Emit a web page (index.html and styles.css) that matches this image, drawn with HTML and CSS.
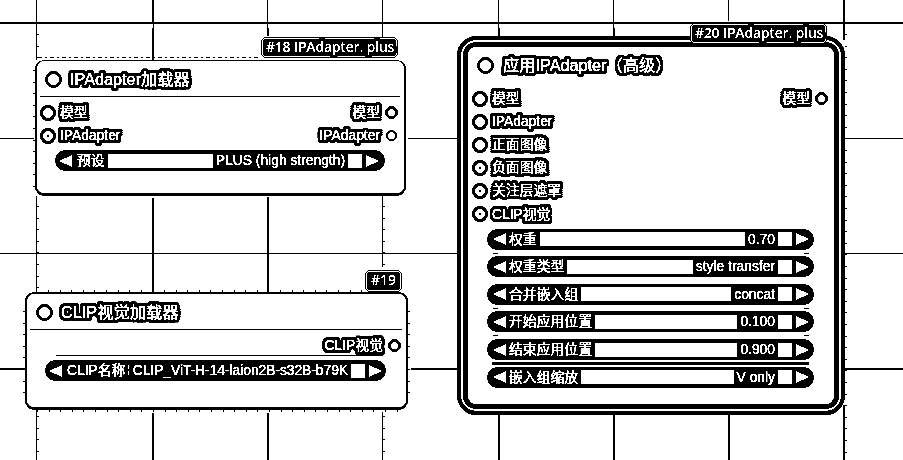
FILE: index.html
```html
<!DOCTYPE html>
<html lang="zh-CN">
<head>
<meta charset="utf-8">
<title>IPAdapter</title>
<link rel="stylesheet" href="styles.css">
</head>
<body>
<main class="canvas">
  <svg class="grid" width="903" height="460" viewBox="0 0 903 460" fill="none" stroke="#000" shape-rendering="crispEdges">
    <path stroke-width="2" d="M0 23H903M153 0V22M153 28V60M153 198V292M153 413V460M268 28V36M268 197V292M268 413V460M499 28V36M499 415V460M614 28V36M614 415V460M729 415V460M844 0V40M844 405V460M0 369H25M411 369H457M845 369H903"/>
    <path d="M36.5 0V60M36.5 196V292M36.5 410V460M153.5 0V28M267.5 0V28M382.5 0V37M382.5 196V267M382.5 412V460M498.5 0V36M613.5 0V36M728.5 0V21M0 138.5H34M408 138.5H457M845 138.5H903M0 253.5H457M845 253.5H903"/>
    <path stroke-width="2" stroke-dasharray="1 10.6" d="M38 34V60M38 206V292M38 416V460M384 206V267M384 416V460M845.500 34V460M34 70V190M24 311V400M409 311V400M468 83V400M48 291H362M37 410.500H400M300 61.500H392"/>
    <path stroke-dasharray="4 3 2 3" d="M38 57.500H258"/>
  </svg>

  <section class="node node-a">
    <span class="badge"><span class="halo">#18 IPAdapter. plus</span></span>
    <header class="title"><i class="ring big"></i><span class="halo">IPAdapter加载器</span></header>
    <div class="slots">
      <div class="slot"><i class="ring"></i><span class="halo">模型</span><span class="halo out">模型</span><i class="ring small"></i></div>
      <div class="slot"><i class="ring dot"></i><span class="halo">IPAdapter</span><span class="halo out">IPAdapter</span><i class="ring small thin"></i></div>
    </div>
    <div class="widget"><svg class="arrow" viewBox="0 0 13 12"><path d="M13 0V12L0 6z"/></svg><span class="label">预设</span><i class="fill"></i><span class="value">PLUS (high strength)</span><i class="cap"></i><svg class="arrow" viewBox="0 0 13 12"><path d="M0 0V12L13 6z"/></svg></div>
  </section>

  <section class="node node-b">
    <span class="badge"><span class="halo">#19</span></span>
    <header class="title"><i class="ring big"></i><span class="halo">CLIP视觉加载器</span></header>
    <div class="slots">
      <div class="slot"><span class="halo out">CLIP视觉</span><i class="ring small"></i></div>
    </div>
    <div class="widget"><svg class="arrow" viewBox="0 0 13 12"><path d="M13 0V12L0 6z"/></svg><span class="label">CLIP名称</span><i class="tick"></i><span class="value model">CLIP_ViT-H-14-laion2B-s32B-b79K</span><i class="cap"></i><svg class="arrow" viewBox="0 0 13 12"><path d="M0 0V12L13 6z"/></svg></div>
  </section>

  <section class="node node-c">
    <span class="badge"><span class="halo">#20 IPAdapter. plus</span></span>
    <header class="title"><i class="ring big"></i><span class="halo">应用IPAdapter（高级）</span></header>
    <div class="slots">
      <div class="slot"><i class="ring"></i><span class="halo">模型</span><span class="halo out">模型</span><i class="ring small"></i></div>
      <div class="slot"><i class="ring"></i><span class="halo">IPAdapter</span></div>
      <div class="slot"><i class="ring"></i><span class="halo">正面图像</span></div>
      <div class="slot"><i class="ring dot"></i><span class="halo">负面图像</span></div>
      <div class="slot"><i class="ring dot"></i><span class="halo">关注层遮罩</span></div>
      <div class="slot"><i class="ring dot"></i><span class="halo">CLIP视觉</span></div>
    </div>
    <div class="widgets">
      <div class="widget marks"><svg class="arrow" viewBox="0 0 13 12"><path d="M13 0V12L0 6z"/></svg><span class="label">权重</span><i class="fill"></i><span class="value">0.70</span><i class="cap"></i><svg class="arrow" viewBox="0 0 13 12"><path d="M0 0V12L13 6z"/></svg></div>
      <div class="widget"><svg class="arrow" viewBox="0 0 13 12"><path d="M13 0V12L0 6z"/></svg><span class="label">权重类型</span><i class="fill"></i><span class="value">style transfer</span><i class="cap"></i><svg class="arrow" viewBox="0 0 13 12"><path d="M0 0V12L13 6z"/></svg></div>
      <div class="widget marks"><svg class="arrow" viewBox="0 0 13 12"><path d="M13 0V12L0 6z"/></svg><span class="label">合并嵌入组</span><i class="fill"></i><span class="value">concat</span><i class="cap"></i><svg class="arrow" viewBox="0 0 13 12"><path d="M0 0V12L13 6z"/></svg></div>
      <div class="widget marks"><svg class="arrow" viewBox="0 0 13 12"><path d="M13 0V12L0 6z"/></svg><span class="label">开始应用位置</span><i class="fill"></i><span class="value">0.100</span><i class="cap"></i><svg class="arrow" viewBox="0 0 13 12"><path d="M0 0V12L13 6z"/></svg></div>
      <div class="widget line"><svg class="arrow" viewBox="0 0 13 12"><path d="M13 0V12L0 6z"/></svg><span class="label">结束应用位置</span><i class="fill"></i><span class="value">0.900</span><i class="cap"></i><svg class="arrow" viewBox="0 0 13 12"><path d="M0 0V12L13 6z"/></svg></div>
      <div class="widget"><svg class="arrow" viewBox="0 0 13 12"><path d="M13 0V12L0 6z"/></svg><span class="label">嵌入组缩放</span><i class="fill"></i><span class="value">V only</span><i class="cap"></i><svg class="arrow" viewBox="0 0 13 12"><path d="M0 0V12L13 6z"/></svg></div>
    </div>
  </section>
</main>
</body>
</html>
```

FILE: styles.css
```css
* { box-sizing: border-box; }
body { margin: 0; background: #fff; }
i { font-style: normal; flex: none; }

.canvas {
  position: relative;
  width: 903px;
  height: 460px;
  overflow: hidden;
  background: #fff;
  font: 13.84px/23px "Liberation Sans", "Noto Sans CJK SC", sans-serif;
  color: #fff;
  -webkit-text-stroke: 0.350px #fff;
  filter: grayscale(1) contrast(12);
}
.grid { position: absolute; inset: 0; }

.node {
  position: absolute;
  background: #fff;
  border: solid #000;
  border-width: 1px 2px 3px 2px;
  border-radius: 9px;
}
.node-a { left: 35px; top: 60px; width: 371px; height: 136px; }
.node-b { left: 25px; top: 292px; width: 383px; height: 118px; border-top-width: 2px; }
.node-c {
  left: 457px; top: 36px; width: 388px; height: 379px;
  border-width: 4px;
  border-radius: 19px;
  box-shadow: inset 0 0 0 2px #fff, inset 0 0 0 7px #000;
}

.halo {
  white-space: nowrap;
  text-shadow:
    3px 0 #000, -3px 0 #000, 0 3px #000, 0 -3px #000,
    2px 3px #000, -2px 3px #000, 2px -3px #000, -2px -3px #000,
    3px 2px #000, -3px 2px #000, 3px -2px #000, -3px -2px #000,
    1px 3px #000, -1px 3px #000, 1px -3px #000, -1px -3px #000,
    2px 1px #000, -2px 1px #000, 2px -1px #000, -2px -1px #000,
    1px 1px #000, -1px 1px #000, 1px -1px #000, -1px -1px #000,
    2px 0 #000, -2px 0 #000, 0 2px #000, 0 -2px #000,
    1px 0 #000, -1px 0 #000, 0 1px #000, 0 -1px #000;
}

.badge {
  position: absolute;
  right: 6px;
  top: -24px;
  height: 21px;
  padding: 0 3px 0 4px;
  border: 1px solid #000;
  border-radius: 5px;
  background: #000;
  box-shadow: inset 0 0 0 1px #fff;
  font: 600 14px/18px "Open Sans", sans-serif;
  letter-spacing: -0.200px;
  -webkit-text-stroke: 0;
  white-space: nowrap;
}
.node-b .badge { right: 4px; top: -24px; height: 22px; line-height: 18px; padding: 0 5px; letter-spacing: 0; }
.node-c .badge { right: 14px; top: -17px; }

.title {
  display: flex;
  align-items: center;
  gap: 8px;
  height: 36px;
  margin: 0 4px 0 3px;
  padding: 2px 0 0 5px;
  border-bottom: 1px solid #000;
  font-size: 16.25px;
}
.node-b .title { padding: 1px 0 0 6px; }
.node-c .title { height: 47px; padding: 4px 0 0 13px; border: 0; gap: 9px; }

.ring {
  width: 16px;
  height: 16px;
  border: 4px solid #000;
  border-radius: 50%;
  background: #fff;
}
.node-c .slot > .ring:first-child, .node-a .slot > .ring:first-child { border-width: 3px; }
.ring.big { width: 17px; height: 17px; border-width: 3px; }
.ring.small { width: 13px; height: 13px; border-width: 3px; margin: 0 0 0 5px; }
.ring.thin { width: 11px; height: 11px; border-width: 2px; margin: 0 1px 0 6px; }
.ring.dot { background: radial-gradient(circle, #000 0 1.400px, #fff 1.500px); }

.slots { padding: 4px 6px 0 3px; }
.slot { display: flex; align-items: center; height: 23.100px; }
.slot > .ring:first-child { margin-right: 4px; }
.out { margin-left: auto; }
.node-b .slots { margin: 0 23px 0 29px; padding: 4px 0 0; height: 26px; border-bottom: 1px solid #000; }
.node-b .slot { margin-right: -18px; }
.node-c .slots { padding: 0 12px 0 11px; }
.node-c .slots .ring.small { margin-right: 1px; }

.widget {
  position: relative;
  display: flex;
  align-items: center;
  height: 21px;
  border-radius: 11px;
  background: #000;
  padding: 0 6px 0 4px;
  line-height: 21px;
  white-space: nowrap;
}
.node-a .widget { margin: 3px 19px 0 18px; }
.node-b .widget { margin: 4px 20px 0 18px; padding-right: 4px; }
.widgets {
  display: flex;
  flex-direction: column;
  gap: 6.650px;
  margin: 3px 27px 0 26px;
}
.node-c .widget { padding: 0 5px 0 6px; }
.arrow { width: 13px; height: 12px; fill: #fff; flex: none; }
.label { margin: 0 3px 0 5px; }
.node-c .label { margin-left: 3px; }
.fill { flex: 1; height: 14px; background: #fff; }
.value { margin: 0 3px; }
.cap { width: 14px; height: 14px; background: #fff; margin-right: 4px; }
.tick { width: 1px; height: 12px; background: repeating-linear-gradient(#fff 0 4px, #000 4px 6px); }
.model { margin: 0 3px 0 auto; letter-spacing: -0.040px; }

.marks::before, .marks::after, .line::after {
  content: "";
  position: absolute;
  bottom: -4px;
  width: 5px;
  height: 1px;
  background: #000;
}
.marks::before { left: 6px; }
.marks::after { right: 5px; }
.line::after { left: 5px; right: 5px; bottom: -5px; width: auto; height: 3px; }
```
